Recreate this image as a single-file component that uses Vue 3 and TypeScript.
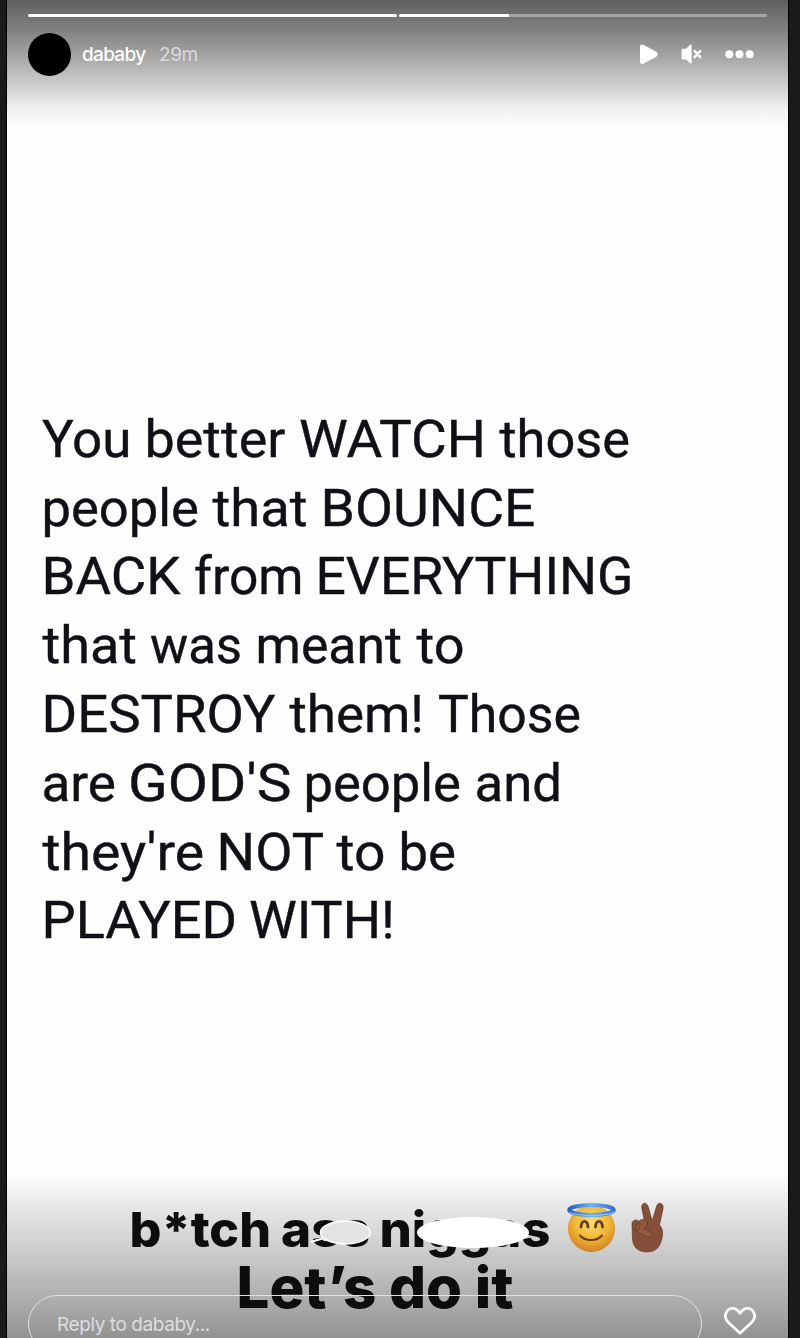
<script setup lang="ts">
interface Word {
  text: string
  from: number
  to: number
}

interface Line {
  y: number
  words: Word[]
}

const quote: Line[] = [
  {
    y: 56.5,
    words: [
      { text: 'You', from: 42, to: 131.5 },
      { text: 'better', from: 144.5, to: 285.5 },
      { text: 'WATCH', from: 299, to: 486 },
      { text: 'those', from: 499.5, to: 630 },
    ],
  },
  {
    y: 125.5,
    words: [
      { text: 'people', from: 41.5, to: 199 },
      { text: 'that', from: 212.5, to: 307.5 },
      { text: 'BOUNCE', from: 320.5, to: 535.5 },
    ],
  },
  {
    y: 194,
    words: [
      { text: 'BACK', from: 41.5, to: 180.5 },
      { text: 'from', from: 194, to: 303.5 },
      { text: 'EVERYTHING', from: 315.5, to: 633.5 },
    ],
  },
  {
    y: 263,
    words: [
      { text: 'that', from: 42.5, to: 137 },
      { text: 'was', from: 150, to: 242 },
      { text: 'meant', from: 255.5, to: 402 },
      { text: 'to', from: 416.5, to: 464.5 },
    ],
  },
  {
    y: 332,
    words: [
      { text: 'DESTROY', from: 41.5, to: 275.5 },
      { text: 'them!', from: 289.5, to: 424 },
      { text: 'Those', from: 438, to: 581 },
    ],
  },
  {
    y: 400.5,
    words: [
      { text: 'are', from: 41.5, to: 116 },
      { text: "GOD'S", from: 128, to: 291.5 },
      { text: 'people', from: 303.5, to: 461 },
      { text: 'and', from: 474.5, to: 562 },
    ],
  },
  {
    y: 469.5,
    words: [
      { text: "they're", from: 42.5, to: 204 },
      { text: 'NOT', from: 216.5, to: 324 },
      { text: 'to', from: 336.5, to: 385.5 },
      { text: 'be', from: 398.5, to: 456 },
    ],
  },
  {
    y: 538,
    words: [
      { text: 'PLAYED', from: 41.5, to: 237 },
      { text: 'WITH!', from: 249, to: 395 },
    ],
  },
]

const segments: number[] = [100, 30]
</script>

<template>
  <main class="viewer">
    <article class="story">
      <header class="top">
        <div class="progress">
          <div v-for="(value, i) in segments" :key="i" class="track">
            <div class="fill" :style="{ width: value + '%' }"></div>
          </div>
        </div>
        <div class="account">
          <span class="avatar"></span>
          <span class="name">dababy</span>
          <span class="time">29m</span>
          <svg class="controls" width="116" height="24" viewBox="0 0 116 24" fill="#fff">
            <path d="M1 4.6C1 2.3 2.8 1.900 4.700 3L16.500 9.200C19.500 10.800 19.500 13.600 16.500 15.200L4.700 21.400C2.800 22.400 1 22 1 19.800Z" />
            <path d="M43.500 6.800H47L51.200 2.800C51.800 2.200 52.600 2.400 52.600 3.300V20.700C52.600 21.600 51.800 21.800 51.200 21.200L47 17.400H43.500Q42.600 17.400 42.600 16.500V7.700Q42.600 6.800 43.500 6.800Z" />
            <path d="M55.600 9.200L61.200 15M61.200 9.200L55.600 15" stroke="#fff" stroke-width="2.600" stroke-linecap="round" />
            <circle cx="90.300" cy="12.200" r="4" />
            <circle cx="100.500" cy="12.200" r="4" />
            <circle cx="110.700" cy="12.200" r="4" />
          </svg>
        </div>
      </header>

      <svg class="quote" width="781" height="572" viewBox="7 0 781 572">
        <g v-for="line in quote" :key="line.y">
          <text
            v-for="word in line.words"
            :key="word.text"
            :x="word.from"
            :y="line.y"
            :textLength="word.to - word.from"
            lengthAdjust="spacingAndGlyphs"
          >{{ word.text }}</text>
        </g>
      </svg>

      <footer class="bottom">
        <svg class="caption" width="781" height="168" viewBox="7 1170 781 168">
          <g class="small">
            <text x="129.500" y="1246.500" textLength="141.500" lengthAdjust="spacingAndGlyphs">b*tch</text>
            <text x="281" y="1246.500" textLength="89" lengthAdjust="spacingAndGlyphs">ass</text>
            <text x="379.500" y="1246.500" textLength="171" lengthAdjust="spacingAndGlyphs">niggas</text>
          </g>
          <text class="large" x="236.500" y="1307.500" textLength="277" lengthAdjust="spacingAndGlyphs">Let’s do it</text>
          <path d="M311 1242L324 1238" stroke="#fff" stroke-width="2" />
          <ellipse cx="345.300" cy="1232.500" rx="24.800" ry="11.400" fill="#e3e3e3" stroke="#fff" stroke-width="1.600" />
          <ellipse cx="473" cy="1232.500" rx="56" ry="15.500" fill="#fff" />

          <defs>
            <radialGradient id="face" cx="50%" cy="36%" r="64%">
              <stop offset="0" stop-color="#fbe070" />
              <stop offset=".55" stop-color="#f3b838" />
              <stop offset="1" stop-color="#cf8426" />
            </radialGradient>
            <linearGradient id="halo">
              <stop offset="0" stop-color="#285fc0" />
              <stop offset=".5" stop-color="#69b5f4" />
              <stop offset="1" stop-color="#3970cf" />
            </linearGradient>
          </defs>
          <circle cx="591.500" cy="1228.500" r="23.500" fill="url(#face)" />
          <ellipse cx="591.500" cy="1210" rx="22.300" ry="5" fill="none" stroke="url(#halo)" stroke-width="4" />
          <path d="M569 1212C574 1216.500 609 1216.500 614 1212" fill="none" stroke="#9bcff6" stroke-width="1" />
          <g fill="none" stroke="#674019" stroke-linecap="round">
            <path d="M581 1227C581.500 1219.500 587.500 1219.500 588 1227M595.500 1227C596 1219.500 602 1219.500 602.500 1227" stroke-width="2.800" />
            <path d="M580 1235.500C585 1241.500 597 1241.500 602 1235.500" stroke-width="2" />
          </g>

          <g stroke="#55301f" stroke-width=".6" stroke-linejoin="round">
            <path d="M644.500 1222L641.800 1208C641 1202 647 1201.500 648.300 1207L652.200 1221L656.500 1206.500C658 1201 664.300 1203 663 1209L659.500 1225C663.500 1229 663 1235 661.500 1240C659.500 1248 655 1252 647 1252C638 1252 633 1247 632.500 1239L632 1224C632 1219.500 637.500 1218.500 639.500 1222Z" fill="#855039" />
            <path d="M639.500 1222C638.500 1219 645 1218.500 647 1222C648.500 1225 646 1228 643.500 1228L651 1232C653.500 1234 651 1238 647.500 1237L639 1233C635.500 1231 634.500 1226 639.500 1222Z" fill="#93593f" />
            <path d="M632.500 1229C637 1233 640 1230 640 1223" fill="none" />
          </g>
        </svg>
        <div class="reply-row">
          <div class="reply">Reply to dababy...</div>
          <svg class="heart" width="34" height="30" viewBox="0 0 34 30" fill="none" stroke="#fff" stroke-width="2.700" stroke-linejoin="round">
            <path d="M17 27.200L5.400 16.600C-1.500 9.300 5 .7 11.300 2.500C14 3.200 15.800 5.200 17 7.400C18.200 5.200 20 3.200 22.700 2.500C29 .7 35.500 9.300 28.600 16.600Z" />
          </svg>
        </div>
      </footer>
    </article>
  </main>
</template>

<style>
body {
  margin: 0;
  overflow: hidden;
}
</style>

<style scoped>
.viewer {
  box-sizing: border-box;
  width: 800px;
  height: 1338px;
  padding: 0 11px 0 6px;
  background: #1a1a1a;
  font-family: Inter, "Liberation Sans", sans-serif;
  overflow: hidden;
}
.story {
  display: flex;
  flex-direction: column;
  box-sizing: border-box;
  height: 1338px;
  border: solid #000;
  border-width: 0 1px;
  background: #fefefe;
}
.top {
  box-sizing: border-box;
  flex: none;
  height: 400px;
  padding: 14px 21px 0;
  background: linear-gradient(#606060 0, #818181 30px, #a7a7a7 58px, #cdcdcd 84px, #efefef 108px, #fefefe 125px);
}
.progress {
  display: flex;
  gap: 2px;
}
.track {
  flex: 1;
  height: 3px;
  border-radius: 2px;
  background: #a5a5a5;
  overflow: hidden;
}
.fill {
  height: 3px;
  background: #fff;
}
.account {
  display: flex;
  align-items: center;
  height: 44px;
  margin-top: 15px;
  font-size: 19px;
  color: #fff;
}
.avatar {
  width: 43px;
  height: 43px;
  margin-right: 11px;
  border-radius: 50%;
  background: #000;
}
.name {
  width: 77px;
  font-weight: 500;
  letter-spacing: -0.7px;
}
.name,
.time {
  padding-top: 1px;
}
.time {
  color: #dadada;
  letter-spacing: -0.4px;
}
.controls {
  margin-left: auto;
  margin-right: 12px;
}
.quote {
  display: block;
  flex: none;
  fill: #101116;
  stroke: #101116;
  stroke-width: 0.4px;
  font-family: Roboto, "Liberation Sans", sans-serif;
  font-size: 52.5px;
}
.bottom {
  display: grid;
  flex: none;
  height: 168px;
  margin-top: auto;
  background: linear-gradient(#fefefe 4px, #efefef 24px, #d9d9d9 60px, #c0c0c0 100px, #aaa 135px, #929292 168px);
}
.caption,
.reply-row {
  grid-area: 1 / 1;
}
.small,
.large {
  fill: #0d0d0d;
  font-weight: 800;
}
.small {
  font-size: 48.5px;
}
.large {
  font-size: 57.5px;
}
.reply-row {
  display: flex;
  align-items: flex-start;
  height: 43px;
  padding: 125px 31px 0 21px;
  overflow: hidden;
}
.reply {
  box-sizing: border-box;
  width: 674px;
  height: 58px;
  padding-left: 28px;
  border: 1px solid #e0e0e0;
  border-radius: 29px;
  color: #dedede;
  font-size: 19px;
  line-height: 58px;
  letter-spacing: -0.42px;
}
.heart {
  margin: 11px 0 0 auto;
}
</style>
